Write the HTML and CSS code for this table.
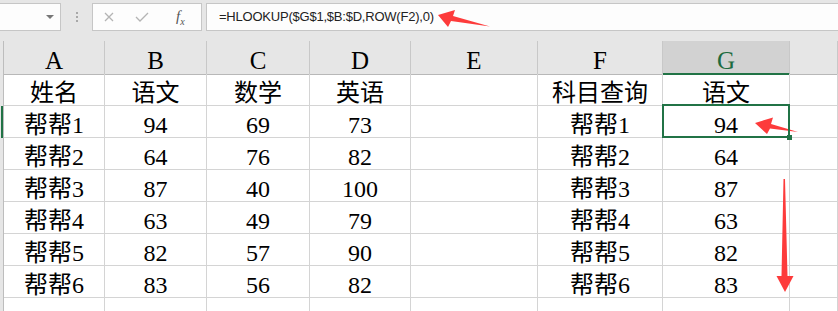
FILE: index.html
```html
<!DOCTYPE html>
<html>
<head>
    <meta charset="utf-8">
    <title>HLOOKUP</title>
    <link rel="stylesheet" href="styles.css">
</head>
<body>
<div class="toolbar">
    <div class="namebox"><span class="caret"></span></div>
    <div class="grip"><i></i><i></i><i></i></div>
    <div class="fxbtns">
        <svg class="ico" width="14" height="10" viewBox="0 0 14 10"><path d="M3 1 L11 9 M11 1 L3 9" stroke="#b4b4b4" stroke-width="1.3" fill="none"/></svg>
        <svg class="ico" width="16" height="10" viewBox="0 0 16 10"><path d="M2 5 L6 9 L14 1" stroke="#b4b4b4" stroke-width="1.3" fill="none"/></svg>
        <span class="fx"><i>f</i><sub>x</sub></span>
    </div>
    <div class="formula">=HLOOKUP($G$1,$B:$D,ROW(F2),0)</div>
</div>

<div class="sheet">
    <div class="row heads">
        <div class="rh"></div>
        <div>A</div><div>B</div><div>C</div><div>D</div><div>E</div><div>F</div><div class="sel">G</div><div></div>
    </div>
    <div class="row">
        <div class="rh"></div>
        <div>姓名</div><div>语文</div><div>数学</div><div>英语</div><div></div><div>科目查询</div><div>语文</div><div></div>
    </div>
    <div class="row">
        <div class="rh cur"></div>
        <div>帮帮1</div><div>94</div><div>69</div><div>73</div><div></div><div>帮帮1</div><div class="active">94</div><div></div>
    </div>
    <div class="row">
        <div class="rh"></div>
        <div>帮帮2</div><div>64</div><div>76</div><div>82</div><div></div><div>帮帮2</div><div>64</div><div></div>
    </div>
    <div class="row">
        <div class="rh"></div>
        <div>帮帮3</div><div>87</div><div>40</div><div>100</div><div></div><div>帮帮3</div><div>87</div><div></div>
    </div>
    <div class="row">
        <div class="rh"></div>
        <div>帮帮4</div><div>63</div><div>49</div><div>79</div><div></div><div>帮帮4</div><div>63</div><div></div>
    </div>
    <div class="row">
        <div class="rh"></div>
        <div>帮帮5</div><div>82</div><div>57</div><div>90</div><div></div><div>帮帮5</div><div>82</div><div></div>
    </div>
    <div class="row">
        <div class="rh"></div>
        <div>帮帮6</div><div>83</div><div>56</div><div>82</div><div></div><div>帮帮6</div><div>83</div><div></div>
    </div>
    <div class="row tail">
        <div class="rh"></div>
        <div></div><div></div><div></div><div></div><div></div><div></div><div></div><div></div>
    </div>
</div>

<!-- red pointer arrows drawn on top of the sheet -->
<svg class="marks" width="838" height="311" viewBox="0 0 838 311">
    <polygon points="438,15 455,10 453,16 490,26.5 451,21 448,27"/>
    <polygon points="755,123 773,117.5 771,124 798,132 770,128.5 767,134"/>
    <polygon points="783.5,179 785,179 787.5,276 793.5,276 785,292 776.5,276 781.5,276"/>
</svg>
</body>
</html>
```

FILE: styles.css
```css
body {
    margin: 0;
    background-color: #e6e6e6;
    font-family: "Liberation Serif", "Noto Sans CJK SC", serif;
    overflow: hidden;
    position: relative;
    width: 838px;
    height: 311px;
}

.toolbar {
    display: flex;
    align-items: stretch;
    height: 28px;
    padding-top: 3px;
}

.namebox {
    width: 62px;
    margin-left: -1px;
    box-sizing: border-box;
    background-color: #fdfdfd;
    border: 1px solid #c6c6c6;
    position: relative;
}

.caret {
    position: absolute;
    right: 6px;
    top: 11px;
    border-left: 4px solid transparent;
    border-right: 4px solid transparent;
    border-top: 4px solid #777777;
}

.grip {
    width: 31px;
    display: flex;
    flex-direction: column;
    align-items: center;
    justify-content: center;
    gap: 2px;
}

.grip i {
    display: block;
    width: 2px;
    height: 2px;
    background-color: #a8a8a8;
}

.fxbtns {
    width: 110px;
    box-sizing: border-box;
    background-color: #fdfdfd;
    border: 1px solid #c6c6c6;
    display: flex;
    align-items: center;
    padding-left: 9px;
    gap: 18px;
}

.fx {
    font-family: "Liberation Serif", serif;
    color: #555555;
    font-size: 15px;
    margin-left: 8px;
}

.fx sub {
    font-style: italic;
    font-size: 10px;
}

.formula {
    flex: 1;
    margin-left: 4px;
    margin-right: -1px;
    box-sizing: border-box;
    background-color: #fdfdfd;
    border: 1px solid #c6c6c6;
    font-family: "Liberation Sans", sans-serif;
    font-size: 13px;
    letter-spacing: -0.22px;
    color: #222222;
    line-height: 26px;
    padding-left: 12px;
}

.sheet {
    margin-top: 10px;
    background-color: #ffffff;
}

.row {
    display: grid;
    grid-template-columns: 4px 101px 102px 103px 101px 127px 125px 127px 1fr;
    height: 32px;
}

.row.tail {
    height: 13px;
}

.row > div {
    box-sizing: border-box;
    border-right: 1px solid #d4d4d4;
    border-bottom: 1px solid #d4d4d4;
    text-align: center;
    font-size: 24px;
    line-height: 24px;
    padding-top: 7px;
    color: #000000;
    white-space: nowrap;
}

.row.tail > div {
    border-bottom: none;
}

.row > .rh {
    background-color: #e6e6e6;
    border-right-color: #bdbdbd;
    border-bottom: none;
}

.row > .rh.cur {
    box-shadow: inset -2px 0 0 #217346;
}

.heads {
    height: 33px;
}

.heads > div {
    background-color: #e6e6e6;
    border-right-color: #c8c8c8;
    border-bottom-color: #b8b8b8;
    font-size: 25px;
    padding-top: 8px;
}

.heads > .sel {
    background-color: #d2d2d2;
    color: #1d6b40;
    border-bottom: 2px solid #217346;
}

.row > .active {
    position: relative;
    z-index: 1;
}

.active::after {
    content: '';
    position: absolute;
    left: -1px;
    top: -2px;
    right: -1px;
    bottom: -1px;
    border: 2px solid #217346;
}

.active::before {
    content: '';
    position: absolute;
    right: -3px;
    bottom: -3px;
    width: 5px;
    height: 5px;
    background-color: #217346;
    z-index: 2;
}

.marks {
    position: absolute;
    left: 0;
    top: 0;
    pointer-events: none;
}

.marks polygon {
    fill: #fd3b3b;
}
```
